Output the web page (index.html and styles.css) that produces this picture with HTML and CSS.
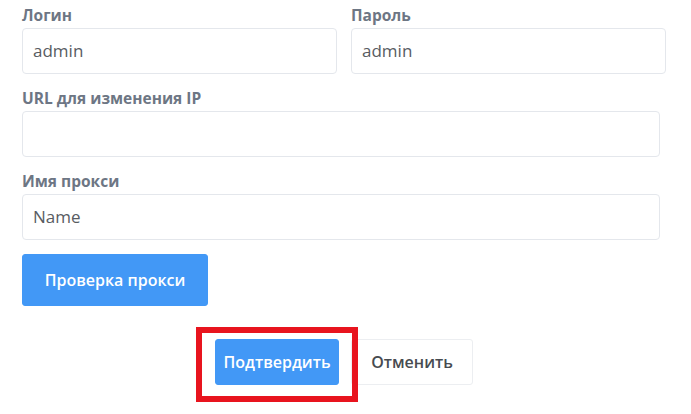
FILE: index.html
```html
<!DOCTYPE html>
<html lang="ru">
<head>
<meta charset="utf-8">
<link rel="stylesheet" href="styles.css">
</head>
<body>
<div class="form">
  <div class="row">
    <div class="field half">
      <label class="label">Логин</label>
      <div class="input">admin</div>
    </div>
    <div class="field half">
      <label class="label">Пароль</label>
      <div class="input">admin</div>
    </div>
  </div>
  <div class="field wide">
    <label class="label">URL для изменения IP</label>
    <div class="input"></div>
  </div>
  <div class="field wide">
    <label class="label">Имя прокси</label>
    <div class="input">Name</div>
  </div>
  <button class="btn btn-primary btn-check">Проверка прокси</button>
  <div class="actions">
    <div class="highlight">
      <button class="btn btn-primary btn-confirm">Подтвердить</button>
    </div>
    <button class="btn btn-default btn-cancel">Отменить</button>
  </div>
</div>
</body>
</html>
```
FILE: styles.css
```css
html, body {
  margin: 0;
  padding: 0;
  background: #ffffff;
}
body {
  font-family: "Open Sans", "Liberation Sans", sans-serif;
  width: 691px;
  height: 414px;
  overflow: hidden;
}
.form {
  padding: 5px 0 0 22px;
}
.row {
  display: flex;
  gap: 14px;
  width: 644px;
}
.field {
  display: flex;
  flex-direction: column;
  margin-bottom: 14px;
}
.half {
  flex: 1;
}
.wide {
  width: 638px;
}
.label {
  font-size: 15.5px;
  line-height: 20px;
  font-weight: 700;
  color: #6d7684;
  margin-bottom: 3px;
}
.input {
  box-sizing: border-box;
  height: 46px;
  border: 1px solid #e4e7ec;
  border-radius: 4px;
  padding: 0 10px;
  font-size: 17px;
  line-height: 44px;
  color: #585c62;
  background: #fff;
}
.btn {
  font-family: "Open Sans", "Liberation Sans", sans-serif;
  font-size: 16px;
  font-weight: 600;
  border-radius: 3px;
  padding: 0;
  cursor: pointer;
}
.btn-primary {
  background: #4298f6;
  color: #ffffff;
  border: 1px solid #4298f6;
}
.btn-default {
  background: #ffffff;
  color: #474b50;
  border: 1px solid #eceef1;
}
.btn-check {
  display: block;
  width: 186px;
  height: 52px;
}
.actions {
  display: flex;
  justify-content: center;
  gap: 12px;
  margin-top: 33px;
  padding-right: 25px;
}
.highlight {
  position: relative;
}
.highlight::after {
  content: "";
  position: absolute;
  top: -12px;
  left: -19px;
  right: -19px;
  bottom: -17px;
  border: 6px solid #e8141e;
  pointer-events: none;
}
.btn-confirm {
  display: block;
  width: 124px;
  height: 46px;
}
.btn-cancel {
  width: 122px;
  height: 46px;
}
```
